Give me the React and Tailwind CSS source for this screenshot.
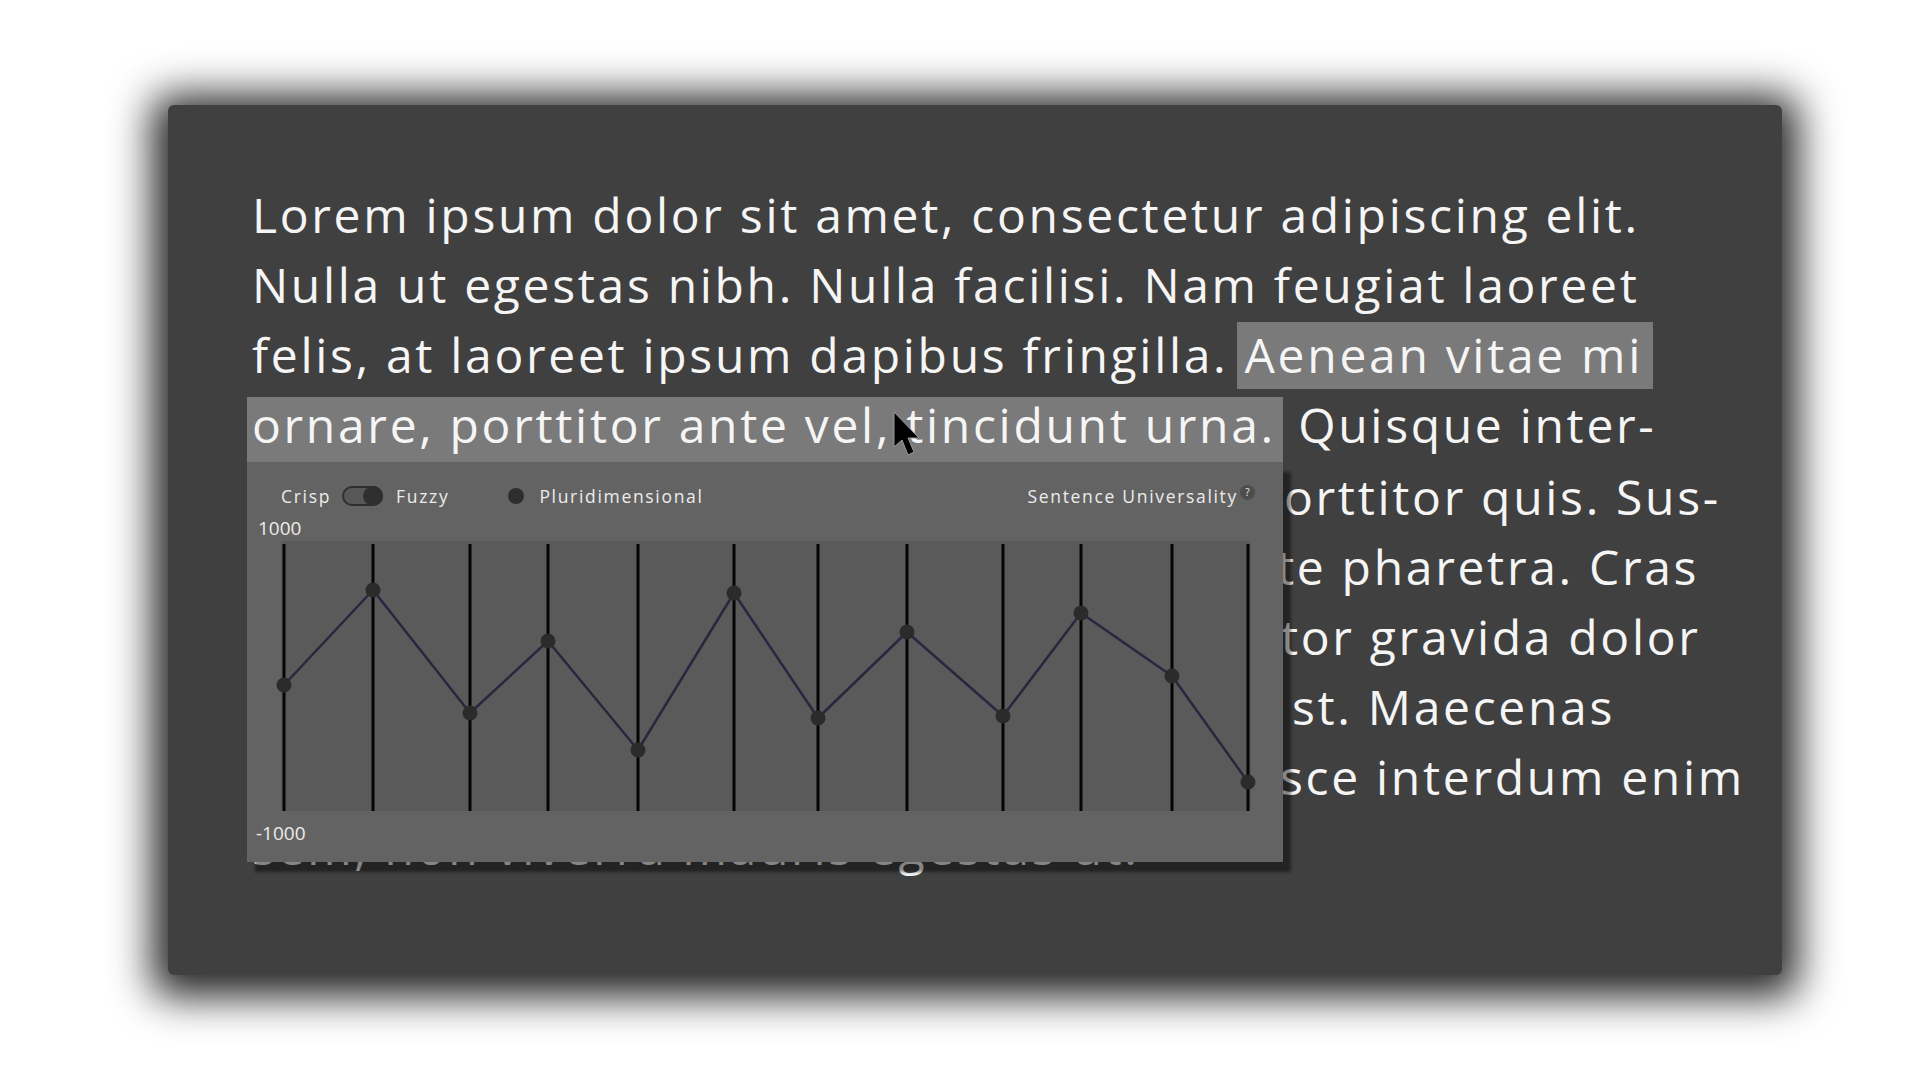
import React from 'react';

// x/y positions of the sample points, in the chart's own box (970 x 270)
const AXES = [3, 92, 189, 267, 357, 453, 537, 626, 722, 800, 891, 967];
const VALUES = [144, 49, 172, 100, 209, 52, 177, 91, 175, 72, 135, 241];

// lines 5-9 are mostly hidden under the panel, only the tail shows
const TAILS = [
  { hidden: 'dum mauris in lectus feugiat, sed p', shown: 'orttitor quis. Sus-', w: 'w-[1032px]' },
  { hidden: 'pendisse potenti. Vivamus in an', shown: 'te pharetra. Cras', w: 'w-[1025px]' },
  { hidden: 'sit amet lacus vel nisl auc', shown: 'tor gravida dolor', w: 'w-[1029px]' },
  { hidden: 'ac. In hac habitasse platea dictum', shown: 'st. Maecenas', w: 'w-[1040px]' },
  { hidden: 'eget tellus vitae nunc tempor. Fu', shown: 'sce interdum enim', w: 'w-[1028px]' },
];

function Chart() {
  const pts = AXES.map((x, i) => `${x},${VALUES[i]}`).join(' ');
  return (
    <div className="ml-[34px] mt-[2px] w-[970px] h-[270px] bg-[#5a5a5a]">
      <svg width="970" height="270" viewBox="0 0 970 270" className="overflow-visible">
        {AXES.map(x => (
          <line key={x} x1={x} y1="3" x2={x} y2="270" stroke="#050505" strokeWidth="3" />
        ))}
        <polyline points={pts} fill="none" stroke="#29273f" strokeWidth="2.5" strokeLinejoin="round" />
        {AXES.map((x, i) => (
          <circle key={x} cx={x} cy={VALUES[i]} r="7.5" fill="#2b2b2b" />
        ))}
      </svg>
    </div>
  );
}

function FuzzyPanel() {
  return (
    <div className="absolute left-0 top-full z-10 flex h-[400px] w-[1036px] flex-col bg-[#636363] shadow-[8px_10px_3px_rgba(0,0,0,0.45)] tracking-[0.035em] text-[#ececec]">
      <div className="mt-[24px] flex h-[20px] items-center pl-[34px] pr-[28px] text-[17.5px] leading-[20px]">
        <span>Crisp</span>
        <div className="ml-[11px] flex h-[20px] w-[41px] justify-end rounded-full border-2 border-[#2f2f2f] bg-[#585858]">
          <div className="-m-[2px] h-[20px] w-[20px] rounded-full bg-[#2f2f2f]" />
        </div>
        <span className="ml-[13px]">Fuzzy</span>
        <span className="ml-[59px] h-[16px] w-[16px] rounded-full bg-[#2e2e2e]" />
        <span className="ml-[15px]">Pluridimensional</span>
        <span className="ml-auto">Sentence Universality</span>
        <span className="relative -top-[4px] ml-[2px] flex h-[15px] w-[15px] items-center justify-center rounded-full bg-[#4d4d4d] text-[10px] leading-none tracking-normal">?</span>
      </div>
      <div className="mt-[11px] pl-[11px] text-[19px] leading-[22px] tracking-normal">1000</div>
      <Chart />
      <div className="mt-[11px] pl-[9px] text-[19px] leading-[22px] tracking-normal">-1000</div>
    </div>
  );
}

function Cursor() {
  return (
    <svg className="absolute left-[725px] top-[306px] z-20" width="30" height="46" viewBox="0 0 30 46">
      <path d="M1 1 L1 36 L9 29 L15 44 L21 41 L15 27 L26 27 Z" fill="#000" stroke="#9a9a9a" strokeWidth="1" strokeLinejoin="round" />
    </svg>
  );
}

export default function App() {
  return (
    <div className="min-h-screen bg-white pl-[168px] pt-[105px] font-['Open_Sans',sans-serif]">
      <div className="relative h-[870px] w-[1614px] rounded-md bg-[#404040] pl-[84px] pt-[75px] shadow-[0_6px_40px_16px_rgba(0,0,0,0.85)]">
        <div className="whitespace-nowrap text-[48px] leading-[70px] tracking-[0.056em] text-[#f5f5f5]">
          <div>Lorem ipsum dolor sit amet, consectetur adipiscing elit.</div>
          <div>Nulla ut egestas nibh. Nulla facilisi. Nam feugiat laoreet</div>
          <div>
            felis, at laoreet ipsum dapibus fringilla.{' '}
            <span className="-ml-[7px] bg-[#7a7a7a] pb-[2px] pl-[8px] pr-[10px]">Aenean vitae mi</span>
          </div>
          <div>
            <span className="relative -ml-[5px] inline-block h-[65px] w-[1036px] bg-[#7a7a7a] pl-[5px] leading-[55px]">
              ornare, porttitor ante vel, tincidunt urna.
              <FuzzyPanel />
            </span>{' '}
            Quisque inter-
          </div>
          {TAILS.map(t => (
            <div key={t.shown} className="flex">
              <span className={`${t.w} shrink-0 overflow-hidden`}>{t.hidden}</span>
              <span>{t.shown}</span>
            </div>
          ))}
          <div>sem, non viverra mauris egestas ut.</div>
        </div>
        <Cursor />
      </div>
    </div>
  );
}
